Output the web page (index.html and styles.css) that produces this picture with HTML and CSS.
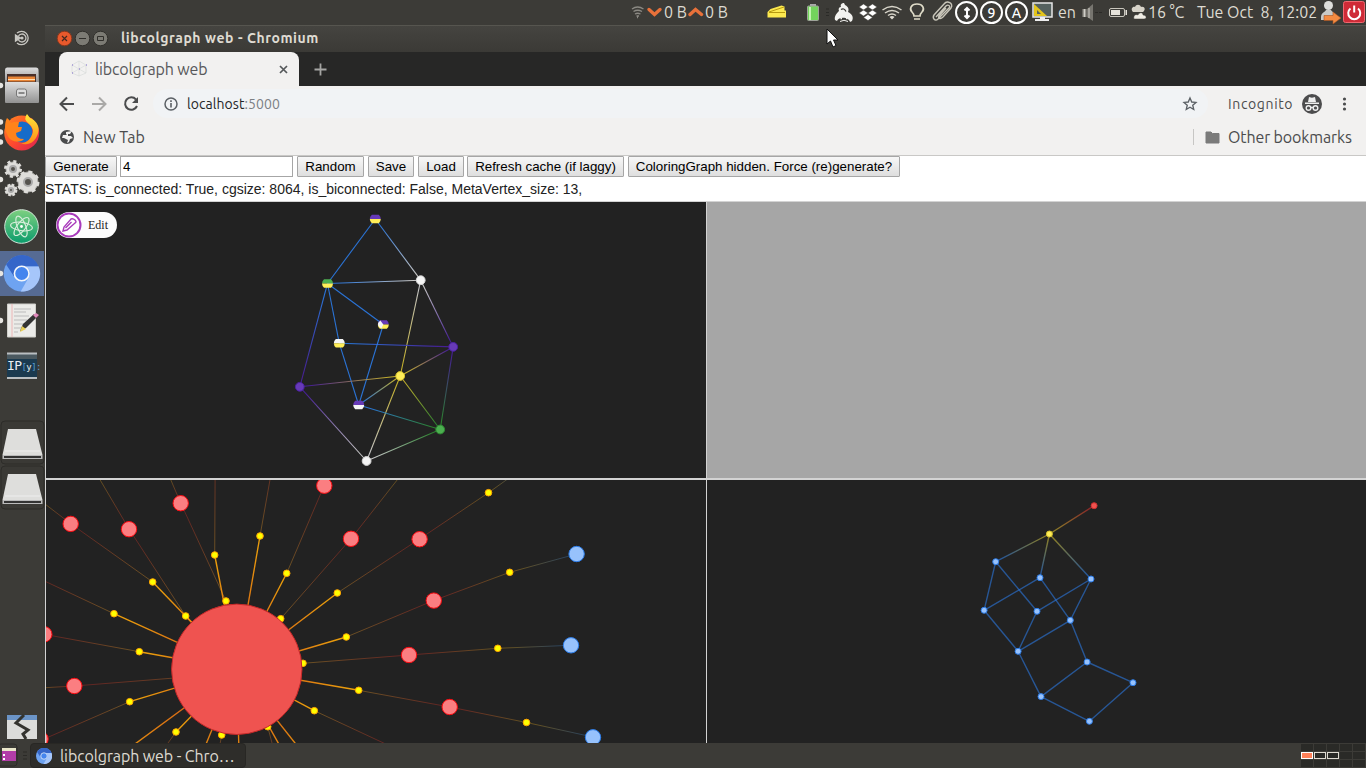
FILE: index.html
```html
<!DOCTYPE html>
<html lang="en">
<head>
<meta charset="utf-8">
<title>libcolgraph web - Chromium</title>
<link rel="stylesheet" href="styles.css">
</head>
<body>
<div class="desktop">
<header class="panel">
  <svg class="ic" width="34" viewBox="630 0 34 25"><g fill="none" stroke="#8b8983" stroke-width="1.3"><path d="M632 9q5.500-4 11.500 0M633.500 11.500q4-2.500 8.500 0M635 14q2.500-1.500 5.500 0"/><path d="M636.500 16h2.500M637 17.500h1"/></g><path d="M649 9.500l5.500 5 5.500-5" fill="none" stroke="#e8713a" stroke-width="3.400" stroke-linecap="round"/></svg>
  <span class="net">0 B</span>
  <svg class="ic" width="17" viewBox="688 0 17 25"><path d="M690 14.500l5.500-5 6 5" fill="none" stroke="#e8713a" stroke-width="3.400" stroke-linecap="round"/></svg>
  <span class="net">0 B</span>
  <svg class="ic note" width="20" viewBox="767 0 20 25"><path d="M767.500 12l3-3 11-3.500 3 1v4h1.500v7h-18.500z" fill="#fce94f"/><path d="M769 12l15-5M769 12.500h16" stroke="#b79a10" fill="none"/></svg>
  <svg class="ic batt" width="28" viewBox="806 0 28 25"><rect x="810" y="4" width="6" height="3" fill="#aaa"/><rect x="807.500" y="6" width="11" height="14.500" rx="1" fill="#73d45c" stroke="#9fa39a"/><path d="M810 7v13" stroke="#c2f5b0" stroke-width="2"/><path d="M826 9h3M826 12.500h3M826 15.500h3" stroke="#2a2a27"/></svg>
  <svg class="ic" width="23" viewBox="834 0 23 25"><path d="M835 20c-1-4 2-7 4-9-1-2 0-4 2-4-1-3 1-4 3-4l1 2c4 2 4 5 3 7 4 2 6 5 4 9l-2 1c-1-5-11-6-13-1z" fill="#f3f3f0"/><path d="M841 9.500q3-2 5 2" stroke="#3c3b37" stroke-width="1.300" fill="none"/><path d="M840.500 18.500h1.500M846 18.500h1.500" stroke="#f3f3f0" stroke-width="1.500"/><path d="M840 21.500q4-2.500 8 0" fill="none" stroke="#f3f3f0"/></svg>
  <svg class="ic" width="23" viewBox="857 0 23 25"><path d="M863.500 4l4.500 3-4.500 3-4.500-3zM872.500 4l4.500 3-4.500 3-4.500-3zM863.500 10l4.500 3-4.500 3-4.500-3zM872.500 10l4.500 3-4.500 3-4.500-3zM868 14.500l4.500 3-4.500 3-4.500-3z" fill="#fff" stroke="#3c3b37" stroke-width=".5"/></svg>
  <svg class="ic" width="25" viewBox="880 0 25 25"><g fill="none" stroke="#d8d5ca" stroke-width="1.500"><path d="M882.500 10q9.500-7 19 0M885 13q7-5 14 0M888 15.500q4-3 8 0"/></g><path d="M889.500 17q2.500-2 5 0l-2.500 2.500z" fill="#dfdbd2"/></svg>
  <svg class="ic" width="25" viewBox="905 0 25 25"><path d="M914 16q0-2-2-4c-3-3-1-8 5-8s8 5 5 8q-2 2-2 4zM914 19h6" fill="none" stroke="#dfdbc8" stroke-width="1.700"/></svg>
  <svg class="ic" width="25" viewBox="930 0 25 25"><path d="M936 17l10-11c2-2 5 0 3 2l-11 11c-3 3-6-1-4-4L944 4c3-4 10-1 7 4l-8 9c-3 3-5 1-4-1l7-8" fill="none" stroke="#c9c6ba" stroke-width="1.400"/></svg>
  <span class="ring"><svg width="12" height="16"><path d="M6 2.500v11M3.500 5.500L6 3l2.500 2.500M3.500 10.500L6 13l2.500-2.500" stroke="#fff" stroke-width="2" fill="none"/></svg></span><span class="ring">9</span><span class="ring">A</span>
  <svg class="ic" width="28" viewBox="1030 0 28 25"><rect x="1033" y="3" width="19" height="14" fill="#55615f" stroke="#e8e8e8" stroke-width="1.500"/><path d="M1034 4v12h13z" fill="#e4c51b"/><path d="M1037 10v4h4z" fill="#55615f"/><path d="M1040 17h5v2h4v2h-14v-2h5z" fill="#eee"/></svg>
  <span class="lang">en</span>
  <svg class="ic" width="68" viewBox="1080 0 68 25"><path d="M1082.500 9h4v8h-4z" fill="#999790"/><path d="M1087 9l6-5v17l-6-4z" fill="#77756f"/><path d="M1084.500 9v8M1089 8v10" stroke="#d0cec8"/><path d="M1095 12.500h7" stroke="#2b2a27" stroke-dasharray="3 1"/><rect x="1109.500" y="8.500" width="15" height="8" rx="1.500" fill="none" stroke="#c9c6bd"/><path d="M1111 10h9v5h-9zM1125.500 10h1.500v5h-1.500z" fill="#e5e2da"/><path d="M1133 12c-3-3 0-6 2-5 1-3 5-3 6 0 4-1 5 3 2 5z" fill="#d7d3c9"/><path d="M1134 19c-1-4 2-5 4-4 1-3 5-3 5 0 4 0 4 4 1 4z" fill="#efece4" stroke="#3c3b37" stroke-width=".5"/></svg>
  <span class="temp">16 °C</span><span class="clock">Tue Oct&nbsp; 8, 12:02</span>
  <svg class="ic" width="46" viewBox="1320 0 46 25"><circle cx="1328.500" cy="5.500" r="4.500" fill="#dededb"/><path d="M1321 20v-3c0-4 4-5 5-7h5c1 2 5 3 5 7v3z" fill="#c9c9c6"/><path d="M1324 15.500h9v-3.500l8 6-8 6v-3.500h-9z" fill="#f38b42" stroke="#a95320" stroke-width=".6"/><rect x="1343.500" y="1.500" width="21" height="21" rx="2" fill="#cf2b37" stroke="#ee6870"/><path d="M1350.500 8.500a6 6 0 1 0 7.500 0M1354.200 5.500v7" fill="none" stroke="#fff" stroke-width="2"/></svg>
</header>
<div class="middle">
  <aside class="dock">
    <svg width="45" height="718" viewBox="0 25 45 718">
      <defs><linearGradient id="metal" x2="0" y2="1"><stop stop-color="#dedede"/><stop offset="1" stop-color="#929292"/></linearGradient><linearGradient id="green" x2="0" y2="1"><stop stop-color="#7ed080"/><stop offset="1" stop-color="#0b9c6c"/></linearGradient><linearGradient id="fox" x2="1" y2="1"><stop stop-color="#ff8b20"/><stop offset=".5" stop-color="#ff4c2d"/><stop offset="1" stop-color="#d91f53"/></linearGradient><linearGradient id="foxy" x2="0" y2="1"><stop stop-color="#ffe83a"/><stop offset="1" stop-color="#ff8b16"/></linearGradient>
      <g id="chromium"><circle r="18" fill="#6ea3f1"/><path d="M-15.600-9A18 18 0 0 1 17-7H0A8 8 0 0 0-7 4z" fill="#3566c9"/><path d="M17-7A18 18 0 0 1-1 18L7 4A8 8 0 0 0 4-7z" fill="#a6c6fa"/><circle r="7.300" fill="#4485ee" stroke="#f5f7fa" stroke-width="1.600"/></g></defs>
      <g fill="none" stroke="#c8c7c2" stroke-width="1.300"><path d="M17 33a6.700 6.700 0 1 1 0 10M18.500 36a4 4 0 1 1 0 4"/><path d="M15.500 35l5 3-5 3z" fill="#c8c7c2"/></g><circle cx="22" cy="38" r="1.600" fill="#c8c7c2"/>
      <g><path d="M5 70q0-2.500 2-2.500h29q2.500 0 2.500 2.500l.5 13H5z" fill="url(#metal)"/><path d="M7 74h29v9H7z" fill="#49302a"/><path d="M8 76.500h27v5H8z" fill="#e88536"/><path d="M8 79.500h27" stroke="#ffe0b8"/><rect x="5" y="82" width="34" height="21" rx="1" fill="url(#metal)"/><rect x="16.500" y="89" width="10" height="8" rx="2" fill="#ddd" stroke="#777"/><path d="M18.500 92h6v2h-6z" fill="#888"/></g>
      <g><circle cx="21.700" cy="133" r="17.500" fill="url(#fox)"/><circle cx="22" cy="132" r="10.500" fill="#176cc9"/><path d="M7 118q3 2 4 5 4-2 8-1l-1 5h4l-1 4-5 2q0 6 8 6c-4 5-15 3-17-5-3-6-2-12 0-16" fill="#ff831b"/><path d="M27 114q-4 5 1 9 8 6 3 14-4 7-11 6 10 4 16-5c6-10 1-17-6-20z" fill="url(#foxy)"/></g>
      <g fill="#deddda" stroke="#b4b3af"><circle cx="13" cy="169" r="7"/><circle cx="28" cy="182" r="10"/><circle cx="11" cy="190" r="5"/></g><g fill="none" stroke="#deddda"><circle cx="13" cy="169" r="7.500" stroke-width="3" stroke-dasharray="3 2.900"/><circle cx="28" cy="182" r="10" stroke-width="3" stroke-dasharray="4 3.850"/><circle cx="11" cy="190" r="5.200" stroke-width="2.500" stroke-dasharray="2.500 1.600"/></g><g fill="#55534e" stroke="#aaa" stroke-width="2"><circle cx="13" cy="169" r="3"/><circle cx="28" cy="182" r="4"/><circle cx="11" cy="190" r="2"/></g>
      <circle cx="21.500" cy="226.500" r="16.800" fill="url(#green)" stroke="#d2e3d8"/><g fill="none" stroke="#d7eddb" stroke-width="1.100"><ellipse cx="21.500" cy="226.500" rx="11" ry="4.200" transform="rotate(8 21.500 226.500)"/><ellipse cx="21.500" cy="226.500" rx="11" ry="4.200" transform="rotate(68 21.500 226.500)"/><ellipse cx="21.500" cy="226.500" rx="11" ry="4.200" transform="rotate(128 21.500 226.500)"/></g><circle cx="21.500" cy="226.500" r="1.400" fill="#fff"/>
      <path d="M0 251h44v45H0z" fill="#566b93"/><use href="#chromium" x="21.700" y="273.500"/>
      <path d="M7.500 304h28v33h-28z" fill="#ebebe8" stroke="#cfcfca"/><path d="M12 304v33" stroke="#edb6b6"/><path d="M14 309h17M14 312h12M14 316h15M14 320h13M14 324h12M14 328h9M14 332h4" stroke="#bbb"/><path d="M20 331l3-7 11-10 3 3-11 11z" fill="#333"/><path d="M20 332l2-6 4 3z" fill="#e8cf54"/><path d="M33 315l3-2 3 2-3 3z" fill="#e089bb"/>
      <path d="M7 353h30v26H7z" fill="#1b3a4f"/><path d="M7 354h30v5H7z" fill="#4b5960"/><path d="M7 353.500h30M7 378h30" stroke="#b9bec1" stroke-width="2"/><text x="7" y="370" class="ip">IP<tspan class="y" fill="#5a9ed0">[</tspan><tspan class="y">y</tspan><tspan class="y" fill="#5a9ed0">]:</tspan></text>
      <g id="drive"><rect x="1" y="421" width="43" height="43" rx="4" fill="#3a3935" stroke="#2d2c29"/><path d="M8 429h28l6.500 26h-40z" fill="#dededc"/><path d="M5 451h35" stroke="#eee"/><path d="M2.500 455h40v4h-40z" fill="#bbb"/><path d="M4 457h37" stroke="#333" stroke-width="2"/></g><use href="#drive" y="45"/>
      <path d="M7 715h30v24H7z" fill="#dbdcda"/><path d="M7 715h30v5H7z" fill="#6b94c7"/><path d="M24 715l-8 8 12 7-5 4 3 5" stroke="#33332f" stroke-width="3" fill="none"/>
      <g fill="#e6e5e1"><circle cx="0.500" cy="85.500" r="2.700"/><circle cx="0.500" cy="122" r="2.700"/><circle cx="0.500" cy="132" r="2.700"/><circle cx="0.500" cy="142" r="2.700"/><circle cx="0.500" cy="179.500" r="2.700"/><circle cx="0.500" cy="273.500" r="2.700"/><circle cx="0.500" cy="320.500" r="2.700"/></g>
    </svg>
  </aside>
  <main class="window">
    <div class="titlebar"><svg width="66" height="27" viewBox="55 25 66 27"><circle cx="64.500" cy="38.500" r="7.300" fill="#e8592c" stroke="#84381f"/><path d="M62 36l5 5M67 36l-5 5" stroke="#44291f" stroke-width="1.200"/><g fill="#7c7b74" stroke="#302f2b"><circle cx="82.500" cy="38.500" r="7.300"/><circle cx="100.500" cy="38.500" r="7.300"/><path d="M79 38.500h7M97.500 36.500h6v4h-6z" fill="none"/></g></svg><span class="title">libcolgraph web - Chromium</span></div>
    <div class="tabs"><div class="tab"><svg width="24" height="34" viewBox="71 52 24 34"><path d="M72 65l7-4 7 4v8l-7 3-7-3zM72 65l7 4 7-4M79 61v15M72 73l7-4 7 4" fill="none" stroke="#d3d8d6" stroke-width=".6"/><path d="M72 65h1M86 65h1M79 69h1M72 73h1" stroke="#a194d5" stroke-width="1.500"/></svg><span class="tabname">libcolgraph web</span><svg class="close" width="9" height="9"><path d="M1 1l7 7M8 1L1 8" stroke="#55585a" stroke-width="1.700"/></svg></div><svg class="plus" width="13" height="13"><path d="M6.500 0.500v12M0.500 6.500h12" stroke="#a5a5a3" stroke-width="1.800"/></svg></div>
    <div class="toolbar"><svg width="96" height="35" viewBox="57 86 96 35"><g fill="none" stroke-width="2"><path d="M74 104H61M67 97.500l-6.500 6.500 6.500 6.500" stroke="#4b4c4d"/><path d="M92 104h13M99 97.500l6.500 6.500-6.500 6.500" stroke="#aaa9a7"/><path d="M136 99.500a6.200 6.200 0 1 0 1 6.500" stroke="#4b4c4d"/></g><path d="M138 97v6h-6z" fill="#4b4c4d"/></svg>
      <div class="omni"><svg width="14" height="14"><circle cx="7" cy="7" r="6" fill="none" stroke="#5b6065" stroke-width="1.500"/><path d="M7 6v4.500M7 3.300v1.600" stroke="#5b6065" stroke-width="1.600"/></svg><span class="url">localhost<i>:5000</i></span><svg class="star" width="16" height="16" viewBox="0 0 24 24"><path d="M12 3l2.600 6 6.400.6-4.900 4.300 1.500 6.300-5.600-3.300-5.600 3.300 1.500-6.300L3 9.600 9.400 9z" fill="none" stroke="#5b6065" stroke-width="2"/></svg></div>
      <span class="incog">Incognito</span><svg width="56" height="35" viewBox="1301 86 56 35"><circle cx="1312" cy="104" r="10" fill="#4c4c4d"/><path d="M1308 102l1-5 3 .7 3-.7 1 5zM1305 102.500h14v1.500h-14z" fill="#eee"/><g fill="none" stroke="#eee" stroke-width="1.400"><circle cx="1308.500" cy="108" r="2.300"/><circle cx="1315.500" cy="108" r="2.300"/><path d="M1311 107.500h2"/></g><g fill="#4b4c4d"><circle cx="1344.500" cy="99" r="1.600"/><circle cx="1344.500" cy="104" r="1.600"/><circle cx="1344.500" cy="109" r="1.600"/></g></svg></div>
    <div class="bookmarks"><svg width="23" height="16" viewBox="0 0 23 16"><circle cx="7" cy="8" r="7" fill="#4a4b4c"/><path d="M6 3l6-1-2 3H8v2h3l2 2-3 1-1 3-2 1 1-3-4-2-2 0 1-3h4L6 5z" fill="#f2f1f0"/></svg><span class="newtab">New Tab</span><span class="sep"></span><svg class="folder" width="15" height="13"><path d="M1 1h5l1.500 1.500H14V12H1z" fill="#7b7b7a" stroke="#7b7b7a" stroke-linejoin="round"/></svg><span class="other">Other bookmarks</span></div>
    <section class="page">
      <div class="controls"><button class="b1">Generate</button><input value="4"><button class="b2">Random</button><button class="b3">Save</button><button class="b4">Load</button><button class="b5">Refresh cache (if laggy)</button><button class="b6">ColoringGraph hidden. Force (re)generate?</button></div>
      <p class="stats">STATS: is_connected: True, cgsize: 8064, is_biconnected: False, MetaVertex_size: 13,</p>
      <div class="grid">
        <div class="cell"><svg id="original" viewBox="46 202 660 276"></svg><div class="edit"><svg width="26" height="26" viewBox="0 0 26 26"><circle cx="13" cy="13" r="11.500" fill="#fff" stroke="#a83abb" stroke-width="2"/><path d="M7 19l1-4 7-8q2-1 4 1t0 3l-8 7zM9.500 16l6-6" fill="none" stroke="#a83abb" stroke-width="1.400"/></svg><span>Edit</span></div></div>
        <div class="cell hidden"></div>
        <div class="cell"><svg id="radial" viewBox="46 480 660 263"></svg></div>
        <div class="cell"><svg id="blocks" viewBox="707 480 659 263"></svg></div>
      </div>
    </section>
  </main>
</div>
<footer class="taskbar"><svg width="30" height="25" viewBox="0 743 30 25"><rect x="-2" y="744" width="19" height="22" rx="3" fill="#3b3a36" stroke="#2c2b28"/><path d="M2 748h14v3H2z" fill="#e9e6c9"/><path d="M2 751h14v10H2z" fill="#b23da8"/><path d="M3 754h2v2H3zM3 758h2v2H3z" fill="#fff"/><path d="M23 752h4M23 755.500h4M23 759h4" stroke="#2b2a27"/></svg><div class="task"><svg width="16" height="16" viewBox="-18 -18 36 36"><use href="#chromium"/></svg><span>libcolgraph web - Chro…</span></div>
<div class="spaces"><i></i><i></i><i></i><i></i><i></i><i class="active"></i><i class="open"></i><i class="open"></i><i></i><i></i><i></i><i></i><i></i><i></i><i></i></div></footer>
<svg class="pointer" width="13" height="20"><path d="M1 1v15l3.500-3 2.500 6 3-1.500-2.500-5.500H12z" fill="#fff" stroke="#111"/></svg>
</div>
<script src="graphs.js"></script>
</body>
</html>
```
FILE: styles.css
```css
* { box-sizing: border-box; }
body { margin: 0; background: #3c3b37; font-family: Ubuntu, "Noto Sans", sans-serif; overflow: hidden; }
svg { display: block; flex: none; }
.desktop { width: 1366px; height: 768px; display: flex; flex-direction: column; position: relative; }
.panel { height: 25px; flex: none; display: flex; align-items: center; padding-left: 630px; background: #3c3b37; color: #dfdbd2; font-size: 16px; line-height: 22px; white-space: nowrap; }
.panel span { flex: none; }
.panel .net, .panel .lang, .panel .temp, .panel .clock { padding-bottom: 2px; }
.ic { height: 25px; }
.net { width: 24px; }
.panel .net + .ic.note { margin-left: 38px; }
.batt { margin-left: 19px; }
.ring { width: 23px; height: 23px; border: 2px solid #fff; border-radius: 50%; display: flex; align-items: center; justify-content: center; font-size: 14px; font-weight: 500; color: #fff; margin-right: 2px; }
.lang { width: 22px; letter-spacing: -.1px; }
.temp { width: 48px; padding-left: 0; letter-spacing: -.1px; }
.clock { width: 124px; padding-left: 1px; font-size: 16px; letter-spacing: 0; }
.middle { height: 718px; flex: none; display: flex; }
.dock { width: 45px; background: #3c3b37; }
.ip { font: 13px "DejaVu Sans Mono", monospace; fill: #e8eef2; letter-spacing: -.6px; }
.y { font-size: 9px; }
.window { width: 1321px; display: flex; flex-direction: column; }
.titlebar { height: 27px; border-top: 1px solid #56554f; background: linear-gradient(#454440, #3b3a36); padding: 0 0 1px 10px; display: flex; align-items: center; }
.title { color: #dfdbd2; font-size: 14px; font-weight: 600; letter-spacing: .57px; white-space: nowrap; padding-bottom: 1px; }
.tabs { height: 34px; background: #272726; padding-left: 14px; display: flex; align-items: center; }
.tab { width: 240px; height: 34px; padding-left: 12px; border-radius: 8px 8px 0 0; background: #f2f1f0; display: flex; align-items: center; }
.tabname { width: 184px; font-size: 16px; color: #57585a; letter-spacing: -.15px; }
.plus { margin-left: 15px; }
.toolbar { height: 35px; background: #f2f1f0; padding-left: 12px; display: flex; align-items: center; }
.omni { width: 1055px; height: 29px; border-radius: 15px; background: #f1f3f5; padding: 0 10px 0 11px; display: flex; align-items: center; }
.url { margin-left: 9px; font-size: 14px; letter-spacing: .07px; color: #252628; }
.url i { color: #7c8084; font-style: normal; }
.star { margin-left: auto; }
.incog { width: 73px; margin-left: 20px; font-size: 14px; letter-spacing: .65px; color: #4b4c4d; }
.bookmarks { height: 35px; padding: 0 14px 2px 15px; border-bottom: 1px solid #c9c8c6; background: #f2f1f0; display: flex; align-items: center; color: #4b4c4d; font-size: 16px; }
.newtab { letter-spacing: -.05px; }
.sep { width: 1px; height: 16px; background: #c7c6c4; margin-left: auto; }
.folder { margin: 0 8px 0 11px; }
.other { width: 124px; letter-spacing: -.13px; white-space: nowrap; }
.page { height: 587px; background: #fff; font-family: "Liberation Sans", sans-serif; display: flex; flex-direction: column; }
.controls { height: 21px; display: flex; flex: none; }
.controls button, .controls input { height: 21px; margin: 0; border: 1px solid #a6a6a6; font: 13.333px "Liberation Sans", sans-serif; color: #000; padding: 0; white-space: nowrap; }
.controls button { background: linear-gradient(#f7f7f7, #dedede); border-radius: 1px; margin-right: 4px; }
.controls input { width: 173px; padding: 1px 2px; background: #fff; margin-right: 4px; border-radius: 0; }
.controls .b1 { width: 72px; margin-right: 3px; }
.controls .b2 { width: 67px; }
.controls .b3, .controls .b4 { width: 46px; }
.controls .b4 { margin-right: 3px; }
.controls .b5 { width: 157px; }
.controls .b6 { width: 272px; }
.stats { height: 24px; margin: 0; padding-top: 4px; font-size: 14px; line-height: 16px; color: #222; flex: none; white-space: nowrap; }
.grid { height: 542px; padding: 1px 0 0 1px; background: #d3d3d3; display: grid; grid-template-columns: 660px 659px; grid-template-rows: 276px 263px; gap: 2px 1px; }
.cell { background: #222; position: relative; overflow: hidden; }
.cell > svg { width: 100%; height: 100%; }
.hidden { background: #a6a6a6; }
.edit { position: absolute; left: 10px; top: 10px; width: 61px; height: 26px; border-radius: 13px; background: #fcfcfc; display: flex; align-items: center; font: 12px "Liberation Serif", serif; color: #222; }
.edit span { margin-left: 6px; }
.taskbar { height: 25px; background: #3c3b37; display: flex; flex: none; }
.task { width: 216px; height: 25px; border: 1px solid #282724; border-radius: 4px; background: #2e2d2a; color: #dfdbd2; font-size: 16px; display: flex; align-items: center; padding-left: 5px; letter-spacing: -.1px; white-space: nowrap; }
.task span { margin-left: 8px; }
.spaces { width: 65px; margin: 1px 0 0 auto; display: grid; grid-template-columns: repeat(5, 12px); grid-template-rows: 7px 7px 7px; gap: 1px; }
.spaces i { background: #2a2a27; }
.spaces .active { background: #ff8159; border: 1px solid #fff; }
.spaces .open { border: 1px solid #dfdbd2; }
.pointer { position: absolute; left: 826px; top: 28px; }
```
FILE: graphs.js
```js
const NS = "http://www.w3.org/2000/svg";
let serial = 0;

function add(parent, name, attrs) {
  const el = document.createElementNS(NS, name);
  for (const key in attrs) el.setAttribute(key, attrs[key]);
  parent.appendChild(el);
  return el;
}

function edge(svg, a, b, from, to, width, opacity) {
  const id = "edge" + serial++;
  const [x1, y1] = a, [x2, y2] = b;
  const g = add(svg, "linearGradient", { id, gradientUnits: "userSpaceOnUse", x1, y1, x2, y2 });
  add(g, "stop", { offset: 0.1, "stop-color": from });
  add(g, "stop", { offset: 0.9, "stop-color": to });
  add(svg, "line", { x1, y1, x2, y2, stroke: `url(#${id})`, "stroke-width": width, opacity });
}

function dot(svg, p, r, fill, stroke) {
  add(svg, "circle", { cx: p[0], cy: p[1], r, fill, stroke, "stroke-width": 1 });
}

// Input graph; nodes with several allowed colours are drawn split.
const blue = "#2b7ce9";
const P = "#673ab7", Y = "#ffee58", G = "#4caf50", W = "#f5f5f5";
const vertices = {
  a: [375.3, 219, blue, P, Y], b: [327.5, 283.5, blue, G, Y], c: [420.7, 280.2, "#d8d8d8", W],
  d: [383.3, 324.5, blue, P, Y], e: [339.3, 343.3, blue, W, Y], f: [453.2, 346.9, "#4a20a0", P],
  g: [400.2, 376, "#d6c02e", Y], h: [299.8, 386.8, "#4a20a0", P], i: [358.7, 405, blue, P, W],
  j: [440.2, 429.5, "#2e8b32", G], k: [366.6, 461, "#d8d8d8", W]
};
const original = document.getElementById("original");
for (const pair of "ab ac bc bd be bh cf cg ef ei di fg fj gh gi gj gk hk ij jk".split(" ")) {
  const s = vertices[pair[0]], t = vertices[pair[1]];
  edge(original, s, t, s[2], t[2], 1.1, 0.9);
}
for (const key in vertices) {
  const [x, y, stroke, top, bottom] = vertices[key];
  if (!bottom) { dot(original, [x, y], 4.4, top, stroke); continue; }
  add(original, "path", { d: `M${x - 5.5} ${y}q0-2.500 2-4.300h7q2 1.800 2 4.300z`, fill: top });
  add(original, "path", { d: `M${x - 5.5} ${y}q0 2.500 2 4.300h7q2-1.800 2-4.300z`, fill: bottom });
  if (key === "d") add(original, "path", { d: `M${x - 3} ${y - 4}L${x} ${y}L${x - 2} ${y + 4}q-6-4-1-8z`, fill: W });
}

// Meta graph, fanned out round the largest component.
const radial = document.getElementById("radial");
const hub = [236.8, 669.3];
const spokes = [[214.7,555],[260,536],[286.7,573.3],[337.3,593],[346.3,637],[358.7,690.3],[314.3,710.7],
  [185.7,616],[152.7,582],[114,613.7],[139.3,651.7],[129.7,701.7],[176,732],[90,777],[188,788],[240,790],[303,787],[325,781]];
const inner = [[280.7,618.7],[226,601],[221.7,735],[267.7,726.7],[303,663.3]];
const branches = [
  [[185.7,616],[129,529],[99,478]], [[152.7,582],[70.7,523.7],[45,504]],
  [[226,601],[180.7,503],[170,478]], [[214.7,555],[215.3,440]], [[260,536],[276,446]],
  [[286.7,573.3],[324.3,485.3]], [[280.7,618.7],[351,538.7],[398.7,478]],
  [[337.3,593],[419.5,539],[488.5,492.7]], [[346.3,637],[433.7,600.5],[509.7,572.3]],
  [[303,663.3],[409,655],[497.8,648.3]], [[358.7,690.3],[449.7,707],[526.5,722.5]],
  [[314.3,710.7],[390,746]], [[114,613.7],[36,577]], [[139.3,651.7],[44,634.3]],
  [[237,673],[74.3,686],[40,688]], [[129.7,701.7],[44,739]], [[176,732],[160,754]],
  [[221.7,735],[218,755]], [[267.7,726.7],[276,758]]
];
for (const line of branches) {
  edge(radial, line[0], line[1], "#ffa82b", "#e53128", 1, 0.32);
  if (line[2]) edge(radial, line[1], line[2], "#e53128", "#d89b24", 1, 0.35);
}
for (const [a, b] of [[[488.5,492.7],[530,463]], [[509.7,572.3],[576.6,554]], [[497.8,648.3],[571,645.3]], [[526.5,722.5],[593,737]]])
  edge(radial, a, b, "#c8941d", "#326eb1", 1, 0.42);
for (const p of spokes) edge(radial, hub, p, "#e45a18", "#ffa90a", 1.4, 0.9);
for (const p of [...spokes, ...inner, [488.5,492.7], [509.7,572.3], [497.8,648.3], [526.5,722.5]])
  dot(radial, p, 3.3, "#ffff00", "#ffa500");
for (const p of [[70.7,523.9],[129,529.2],[180.7,503.2],[324.3,485.7],[351,538.8],[419.6,539.2],[433.8,600.6],[409,655],[449.7,707],[44.3,634.3],[74.3,686],[40.5,739]])
  dot(radial, p, 7.7, "#fb7e81", "#fa0a10");
for (const p of [[576.6,554],[571,645.3],[593,737.3]]) dot(radial, p, 7.7, "#97c2fc", "#2b7ce9");
dot(radial, hub, 65.2, "#ef5350", "#c62828");

// Selected component with its cut vertex.
const blocks = document.getElementById("blocks");
const nodes = [[1094.100,505.7],[1049.4,534],[995.7,561.7],[1040,577.7],[1091,579],[984.100,610.3],[1037,611.3],
  [1070.3,620.3],[1018.100,651.3],[1087.100,662],[1133,682.7],[1041,696.6],[1089.4,721.3]];
const tone = i => i === 0 ? "#d32f2f" : i === 1 ? "#d6c02e" : blue;
for (const [a, b] of [[0,1],[1,2],[1,3],[1,4],[2,5],[2,6],[3,5],[3,7],[4,6],[4,7],[5,8],[6,8],[7,8],[7,9],[8,11],[9,10],[9,11],[11,12],[10,12]])
  edge(blocks, nodes[a], nodes[b], tone(a), tone(b), 1.4, 0.58);
nodes.forEach((p, i) => dot(blocks, p, 3, i === 0 ? "#ef5350" : i === 1 ? Y : "#97c2fc", tone(i)));
```
